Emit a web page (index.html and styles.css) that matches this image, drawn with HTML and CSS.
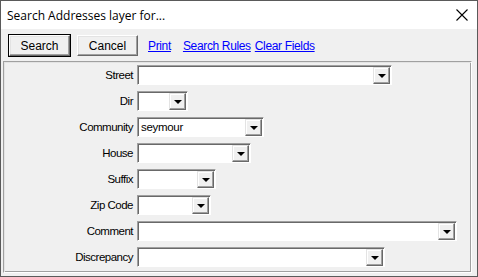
FILE: index.html
```html
<!DOCTYPE html>
<html lang="en">
  <head>
    <meta charset="UTF-8" />
    <title>Search Addresses layer for...</title>
    <link rel="stylesheet" href="styles.css">
  </head>
  <body>
    <div class="window">
      <div class="titlebar">
        <span class="title">Search Addresses layer for...</span>
        <svg class="close" width="12" height="12" viewBox="0 0 12 12">
          <path d="M0.5 0.5 L11.5 11.5 M11.5 0.5 L0.5 11.5" stroke="#000" stroke-width="1.1" fill="none" />
        </svg>
      </div>

      <div class="toolbar">
        <button class="btn btn-default">Search</button>
        <button class="btn">Cancel</button>
        <a class="link link-print" href="#">Print</a>
        <a class="link" href="#">Search Rules</a>
        <a class="link" href="#">Clear Fields</a>
      </div>

      <div class="panel">
        <div class="field-row">
          <label>Street</label>
          <div class="combo combo-street"><span class="combo-text"></span><span class="drop"></span></div>
        </div>
        <div class="field-row">
          <label>Dir</label>
          <div class="combo combo-dir"><span class="combo-text"></span><span class="drop"></span></div>
        </div>
        <div class="field-row">
          <label>Community</label>
          <div class="combo combo-community"><span class="combo-text">seymour</span><span class="drop"></span></div>
        </div>
        <div class="field-row">
          <label>House</label>
          <div class="combo combo-house"><span class="combo-text"></span><span class="drop"></span></div>
        </div>
        <div class="field-row">
          <label>Suffix</label>
          <div class="combo combo-suffix"><span class="combo-text"></span><span class="drop"></span></div>
        </div>
        <div class="field-row">
          <label>Zip Code</label>
          <div class="combo combo-zip"><span class="combo-text"></span><span class="drop"></span></div>
        </div>
        <div class="field-row">
          <label>Comment</label>
          <div class="combo combo-comment"><span class="combo-text"></span><span class="drop"></span></div>
        </div>
        <div class="field-row">
          <label>Discrepancy</label>
          <div class="combo combo-discrepancy"><span class="combo-text"></span><span class="drop"></span></div>
        </div>
      </div>
    </div>
  </body>
</html>
```

FILE: styles.css
```css
* {
  margin: 0;
  padding: 0;
  box-sizing: border-box;
  font-family: "Liberation Sans", Arial, sans-serif;
}

body {
  background: #ffffff;
}

.window {
  width: 478px;
  height: 277px;
  border: 1px solid #5a5a5a;
  display: flex;
  flex-direction: column;
  background: #f0f0f0;
}

.titlebar {
  height: 28px;
  background: #ffffff;
  display: flex;
  align-items: center;
  justify-content: space-between;
  padding: 0 9px 0 6px;
}

.title {
  font-family: "Open Sans", "Liberation Sans", sans-serif;
  font-size: 12px;
  color: #000;
}

.close {
  display: block;
}

.toolbar {
  height: 32px;
  display: flex;
  align-items: center;
  padding-left: 8px;
  padding-top: 1px;
}

.btn {
  width: 61px;
  height: 21px;
  margin-right: 7px;
  background: #f0f0f0;
  font-size: 12px;
  color: #000;
  border: 1px solid;
  border-color: #ffffff #696969 #696969 #ffffff;
  box-shadow: inset -1px -1px 0 #a0a0a0, inset 1px 1px 0 #e3e3e3;
}

.btn-default {
  outline: 1px solid #000;
  outline-offset: 0;
}

.link {
  color: #0000ff;
  font-size: 12px;
  letter-spacing: -0.35px;
  text-decoration: underline;
  margin-right: 4px;
}

.link-print {
  margin-left: 3px;
  margin-right: 12px;
}

.panel {
  flex: 1;
  margin: 0 5px 3px 2px;
  border: 1px solid;
  border-color: #a0a0a0 #ffffff #ffffff #a0a0a0;
  box-shadow: inset 1px 1px 0 #e3e3e3, inset -1px -1px 0 #a0a0a0;
  padding-top: 3px;
  display: flex;
  flex-direction: column;
  gap: 6px;
}

.field-row {
  display: grid;
  grid-template-columns: 129px auto;
  column-gap: 4px;
  align-items: center;
  height: 20px;
}

.field-row label {
  text-align: right;
  font-size: 11.5px;
  color: #000;
  letter-spacing: -0.5px;
}

.combo {
  height: 20px;
  display: flex;
  align-items: center;
  background: #ffffff;
  border: 1px solid;
  border-color: #a0a0a0 #ffffff #ffffff #a0a0a0;
  box-shadow: inset 1px 1px 0 #696969;
  padding: 1px 1px 1px 2px;
}

.combo-text {
  flex: 1;
  font-size: 11.5px;
  letter-spacing: -0.3px;
  color: #000;
  padding-left: 1px;
}

.drop {
  width: 17px;
  height: 17px;
  background: #f0f0f0;
  border: 1px solid;
  border-color: #e3e3e3 #696969 #696969 #e3e3e3;
  box-shadow: inset -1px -1px 0 #a0a0a0, inset 1px 1px 0 #ffffff;
  position: relative;
}

.drop::after {
  content: "";
  position: absolute;
  left: 4px;
  top: 6px;
  border-left: 4px solid transparent;
  border-right: 4px solid transparent;
  border-top: 4px solid #000;
}

.combo-street { width: 255px; }
.combo-dir { width: 51px; }
.combo-community { width: 127px; }
.combo-house { width: 114px; }
.combo-suffix { width: 79px; }
.combo-zip { width: 74px; }
.combo-comment { width: 320px; }
.combo-discrepancy { width: 248px; }
```
